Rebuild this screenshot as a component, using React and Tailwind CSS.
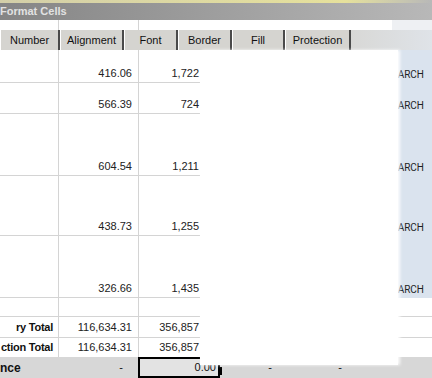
import React from "react";

const rows = [
  { h: "h-[33px]", b: "416.06", c: "1,722", d: "ARCH" },
  { h: "h-[31px]", b: "566.39", c: "724", d: "ARCH" },
  { h: "h-[62px]", b: "604.54", c: "1,211", d: "ARCH" },
  { h: "h-[60px]", b: "438.73", c: "1,255", d: "ARCH" },
  { h: "h-[62px]", b: "326.66", c: "1,435", d: "ARCH" },
  { h: "h-[19px]", white: true },
  { h: "h-[21px]", a: "ry Total", b: "116,634.31", c: "356,857", white: true, mid: true },
  { h: "h-[19px]", a: "ction Total", b: "116,634.31", c: "356,857", white: true, mid: true, last: true },
];

const tabs = [
  { label: "Number", w: "w-[60px]" },
  { label: "Alignment", w: "w-[64px]" },
  { label: "Font", w: "w-[54px]" },
  { label: "Border", w: "w-[54px]" },
  { label: "Fill", w: "w-[53px]" },
  { label: "Protection", w: "w-[66px]" },
];

const SheetRow = ({ row }) => {
  // the last white row has no bottom line, the gray balance row starts right below it
  const line = row.last ? "" : "border-b border-[#d4d4d4]";
  const align = row.mid ? "items-center" : "items-end pb-[2px]";
  return (
    <div className={`flex ${row.h} text-[11px] leading-[13px] text-[#222]`}>
      <div className={`w-[59px] flex justify-end ${align} pr-[5px] border-r border-[#d4d4d4] ${line} whitespace-nowrap font-bold text-[#111] tracking-[-0.25px]`}>
        {row.a}
      </div>
      <div className={`w-[80px] flex justify-end ${align} pr-[6px] border-r border-[#d4d4d4] ${line}`}>
        {row.b}
      </div>
      <div className={`w-[60px] flex justify-end ${align} ${line}`}>{row.c}</div>
      <div className={`flex-1 ${line}`} />
      {row.white ? (
        <div className={`w-[34px] ${line}`} />
      ) : (
        <div className="w-[34px] bg-[#dae3ee] flex justify-end items-end pb-[2px] pr-[8px] whitespace-nowrap font-['Roboto',sans-serif] text-[10px] text-[#1e1e1e]">
          {row.d}
        </div>
      )}
    </div>
  );
};

export default function App() {
  return (
    <div className="relative w-[432px] h-[378px] overflow-hidden bg-white font-['Liberation_Sans',Arial,sans-serif]">
      <div className="h-[3px] bg-linear-to-r from-[#d3cfa9] via-[#e6e19c] via-80% to-[#b8b8b8]" />
      <div className="h-[17px] bg-linear-to-r from-[#858585] to-[#b8b8b8] text-[11px] leading-[17px] font-bold text-[#e2e2e2] whitespace-nowrap">
        Format Cells
      </div>

      <div className="flex h-[10px]">
        <div className="w-[59px] border-r border-[#d4d4d4]" />
        <div className="w-[80px] border-r border-[#d4d4d4]" />
        <div className="flex-1" />
        <div className="w-[40px] bg-[#eef0f3]" />
      </div>

      <div className="flex h-[20px] bg-[#d5d4d0] text-[11px] text-[#111]">
        {tabs.map((t) => (
          <div
            key={t.label}
            className={`${t.w} flex items-center justify-center border-l border-white border-r-2 border-r-[#4a4a4a] pt-[1px]`}
          >
            {t.label}
          </div>
        ))}
        <div className="flex-1 bg-linear-to-r from-[#d8d8d6] to-[#dfe3e8]" />
      </div>

      {rows.map((row, i) => (
        <SheetRow key={i} row={row} />
      ))}

      <div className="flex h-[21px] bg-[#d7d7d7] items-center text-[11px] text-[#111]">
        <div className="w-[59px] font-bold text-[12px]">nce</div>
        <div className="w-[79px] text-right pr-[15px]">-</div>
        <div className="relative w-[82px] h-full border-2 border-black bg-[#e3e3e3] flex items-center justify-end pr-[2px]">
          0.00
          <div className="absolute -right-[4px] bottom-[1px] w-[4px] h-[8px] bg-black" />
        </div>
        <div className="w-[72px] text-right pr-[20px]">-</div>
        <div className="w-[70px] text-right pr-[20px]">-</div>
      </div>

      {/* dialog body lying over the sheet */}
      <div className="absolute left-[200px] top-[50px] w-[198px] h-[315px] bg-white shadow-[2px_0_3px_rgba(255,255,255,0.9)]" />
    </div>
  );
}
